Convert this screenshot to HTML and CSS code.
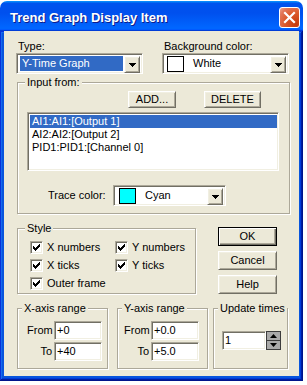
FILE: index.html
```html
<!DOCTYPE html>
<html lang="en">
<head>
    <meta charset="UTF-8">
    <title>Trend Graph Display Item</title>
    <link rel="stylesheet" href="styles.css">
</head>
<body>
    <div class="window">
        <div class="titlebar">
            <span class="title">Trend Graph Display Item</span>
            <span class="close">
                <svg width="19" height="19" viewBox="0 0 19 19"><path d="M5 5L14 14M14 5L5 14" stroke="#fff" stroke-width="2.2" stroke-linecap="square"/></svg>
            </span>
        </div>
        <div class="frame">
            <div class="client">
                <!-- type / background -->
                <div class="topRow">
                    <div class="field">
                        <div class="label">Type:</div>
                        <div class="combo">
                            <div class="comboText focus">Y-Time Graph</div>
                            <div class="drop"><svg width="7" height="4" viewBox="0 0 7 4"><path d="M0 0h7v1h-1v1h-1v1h-1v1h-1v-1h-1v-1h-1v-1h-1z"/></svg></div>
                        </div>
                    </div>
                    <div class="field">
                        <div class="label">Background color:</div>
                        <div class="combo">
                            <div class="comboText"><span class="swatch"></span>White</div>
                            <div class="drop"><svg width="7" height="4" viewBox="0 0 7 4"><path d="M0 0h7v1h-1v1h-1v1h-1v1h-1v-1h-1v-1h-1v-1h-1z"/></svg></div>
                        </div>
                    </div>
                </div>

                <!-- input from -->
                <div class="group inputBox">
                    <div class="legend">Input from:</div>
                    <div class="btnRow">
                        <div class="btn addBtn">ADD...</div>
                        <div class="btn delBtn">DELETE</div>
                    </div>
                    <div class="listbox">
                        <div class="item selected">AI1:AI1:[Output 1]</div>
                        <div class="item">AI2:AI2:[Output 2]</div>
                        <div class="item">PID1:PID1:[Channel 0]</div>
                    </div>
                    <div class="traceRow">
                        <span class="traceLabel">Trace color:</span>
                        <div class="combo traceCombo">
                            <div class="comboText"><span class="swatch cyan"></span>Cyan</div>
                            <div class="drop"><svg width="7" height="4" viewBox="0 0 7 4"><path d="M0 0h7v1h-1v1h-1v1h-1v1h-1v-1h-1v-1h-1v-1h-1z"/></svg></div>
                        </div>
                    </div>
                </div>

                <!-- style + buttons -->
                <div class="midRow">
                    <div class="group styleBox">
                        <div class="legend">Style</div>
                        <div class="checks">
                            <div class="check"><span class="box"><svg width="7" height="7" viewBox="0 0 7 7"><path d="M0 2h1v3h-1zM1 3h1v3h-1zM2 4h1v3h-1zM3 3h1v3h-1zM4 2h1v3h-1zM5 1h1v3h-1zM6 0h1v3h-1z"/></svg></span>X numbers</div>
                            <div class="check"><span class="box"><svg width="7" height="7" viewBox="0 0 7 7"><path d="M0 2h1v3h-1zM1 3h1v3h-1zM2 4h1v3h-1zM3 3h1v3h-1zM4 2h1v3h-1zM5 1h1v3h-1zM6 0h1v3h-1z"/></svg></span>Y numbers</div>
                            <div class="check"><span class="box"><svg width="7" height="7" viewBox="0 0 7 7"><path d="M0 2h1v3h-1zM1 3h1v3h-1zM2 4h1v3h-1zM3 3h1v3h-1zM4 2h1v3h-1zM5 1h1v3h-1zM6 0h1v3h-1z"/></svg></span>X ticks</div>
                            <div class="check"><span class="box"><svg width="7" height="7" viewBox="0 0 7 7"><path d="M0 2h1v3h-1zM1 3h1v3h-1zM2 4h1v3h-1zM3 3h1v3h-1zM4 2h1v3h-1zM5 1h1v3h-1zM6 0h1v3h-1z"/></svg></span>Y ticks</div>
                            <div class="check"><span class="box"><svg width="7" height="7" viewBox="0 0 7 7"><path d="M0 2h1v3h-1zM1 3h1v3h-1zM2 4h1v3h-1zM3 3h1v3h-1zM4 2h1v3h-1zM5 1h1v3h-1zM6 0h1v3h-1z"/></svg></span>Outer frame</div>
                        </div>
                    </div>
                    <div class="actions">
                        <div class="btn bigBtn default">OK</div>
                        <div class="btn bigBtn">Cancel</div>
                        <div class="btn bigBtn">Help</div>
                    </div>
                </div>

                <!-- ranges -->
                <div class="bottomRow">
                    <div class="group rangeBox xBox">
                        <div class="legend small">X-axis range</div>
                        <div class="range">
                            <span class="rLabel">From</span><div class="edit">+0</div>
                            <span class="rLabel">To</span><div class="edit">+40</div>
                        </div>
                    </div>
                    <div class="group rangeBox yBox">
                        <div class="legend small">Y-axis range</div>
                        <div class="range">
                            <span class="rLabel">From</span><div class="edit">+0.0</div>
                            <span class="rLabel">To</span><div class="edit">+5.0</div>
                        </div>
                    </div>
                    <div class="group rangeBox updBox">
                        <div class="legend small">Update times</div>
                        <div class="spinRow">
                            <div class="edit updEdit">1</div>
                            <div class="spin">
                                <svg width="15" height="19" viewBox="0 0 15 19">
                                    <rect x="0.5" y="0.5" width="14" height="18" fill="#a9a9a9" stroke="#3c3c3c"/>
                                    <path d="M1 9.5h13" stroke="#3c3c3c"/>
                                    <path d="M4 7h7l-3.5-4z"/>
                                    <path d="M4 12h7l-3.5 4z"/>
                                </svg>
                            </div>
                        </div>
                    </div>
                </div>
            </div>
        </div>
    </div>
</body>
</html>
```

FILE: styles.css
```css
*{
    margin: 0;
    padding: 0;
    box-sizing: border-box;
}
body{
    background: #fff;
    font: 11px/13px "Liberation Sans", Arial, sans-serif;
    color: #000;
}
.window{
    width: 303px;
    margin-top: 1px;
}
.titlebar{
    height: 30px;
    display: flex;
    align-items: center;
    justify-content: space-between;
    padding: 3px 3px 0 10px;
    border-radius: 7px 7px 0 0;
    background: linear-gradient(180deg, #0997ff, #0053ee 8%, #0050ee 40%, #0066ff 88%, #0066ff 93%, #005bff 95%, #003dd7 96%, #003dd7);
}
.title{
    font: bold 13px "Liberation Sans", Arial, sans-serif;
    color: #fff;
    text-shadow: 1px 1px #0f1c8a;
}
.close{
    width: 21px;
    height: 21px;
    display: flex;
    align-items: center;
    justify-content: center;
    border: 1px solid #fff;
    border-radius: 3px;
    background: radial-gradient(circle at 85% 85%, #c43a0e 0, #dc5a2c 50%, #e2775a 80%, #f0a890 100%);
}
.frame{
    background: #0855dd;
    padding: 0 4px 5px;
    box-shadow: inset -1px -1px #00138c, inset 1px 1px #0831d9, inset -2px -2px #001ea0, inset 2px 2px #166aee, inset -3px -3px #003bda, inset 3px 3px #0855dd;
}
.client{
    background: #ece9d8;
    height: 345px;
    padding: 9px 10px 0 12px;
}

/* sunken and raised edges */
.combo, .listbox, .edit, .box{
    background: #fff;
    border: 1px solid;
    border-color: #aca899 #fff #fff #aca899;
    box-shadow: inset 1px 1px #716f64, inset -1px -1px #f1efe2;
}
.btn, .drop{
    background: #ece9d8;
    border: 1px solid;
    border-color: #fff #716f64 #716f64 #fff;
    box-shadow: inset 1px 1px #f1efe2, inset -1px -1px #aca899;
    display: flex;
    align-items: center;
    justify-content: center;
}

.topRow{
    display: flex;
    gap: 19px;
}
.field{
    width: 127px;
}
.label{
    height: 13px;
    padding-left: 2px;
}
.combo{
    height: 21px;
    display: flex;
    padding: 2px;
}
.comboText{
    flex: 1;
    display: flex;
    align-items: center;
    padding-left: 2px;
    margin-right: 1px;
}
.comboText.focus{
    background: #316ac5;
    color: #fff;
    margin-left: 1px;
}
.drop{
    width: 16px;
    height: 17px;
}
.swatch{
    width: 17px;
    height: 16px;
    border: 1px solid #000;
    background: #fff;
    margin-right: 9px;
}
.swatch.cyan{
    background: #00ffff;
}

.group{
    border: 1px solid #aca899;
    box-shadow: inset 1px 1px #fff, 1px 1px #fff;
    margin-left: 1px;
}
.legend{
    display: table;
    height: 13px;
    margin: -7px 0 0 7px;
    padding: 0 2px;
    background: #ece9d8;
}
.legend.small{
    margin-left: 4px;
}

.inputBox{
    width: 273px;
    margin-top: 8px;
    padding-bottom: 7px;
}
.btnRow{
    display: flex;
    gap: 28px;
    margin: 2px 0 0 110px;
}
.addBtn{
    width: 48px;
    height: 17px;
}
.delBtn{
    width: 57px;
    height: 17px;
}
.listbox{
    width: 252px;
    height: 59px;
    margin: 4px 0 0 9px;
    padding: 2px 1px 0 2px;
}
.item{
    height: 13px;
    padding-left: 2px;
}
.item.selected{
    background: #316ac5;
    color: #fff;
}
.traceRow{
    display: flex;
    align-items: center;
    margin-top: 14px;
    padding-left: 30px;
}
.traceLabel{
    width: 65px;
}
.traceCombo{
    width: 113px;
}
.traceCombo .swatch{
    margin-left: 1px;
}

.midRow{
    display: flex;
    align-items: flex-start;
    margin-top: 14px;
}
.styleBox{
    width: 179px;
    height: 66px;
}
.checks{
    display: grid;
    grid-template-columns: 85px auto;
    grid-auto-rows: 18px;
    margin-top: 3px;
    padding-left: 12px;
}
.check{
    display: flex;
    align-items: center;
    gap: 4px;
}
.box{
    width: 13px;
    height: 13px;
    display: flex;
    align-items: center;
    justify-content: center;
}
.actions{
    display: flex;
    flex-direction: column;
    gap: 5px;
    margin: -1px 0 0 22px;
}
.bigBtn{
    width: 59px;
    height: 19px;
}
.bigBtn.default{
    border: 1px solid #000;
    box-shadow: inset 1px 1px #fff, inset -1px -1px #716f64, inset -2px -2px #aca899;
}

.bottomRow{
    display: flex;
    margin-top: 14px;
}
.rangeBox{
    height: 61px;
}
.xBox{
    width: 91px;
}
.yBox{
    width: 91px;
    margin-left: 9px;
}
.updBox{
    width: 75px;
    margin-left: 5px;
}
.range{
    display: grid;
    grid-template-columns: 25px 48px;
    column-gap: 2px;
    row-gap: 2px;
    margin-top: 6px;
    padding-left: 9px;
}
.yBox .range{
    padding-left: 6px;
}
.rLabel{
    text-align: right;
    align-self: center;
}
.edit{
    height: 19px;
    padding: 0 0 0 2px;
    line-height: 17px;
}
.spinRow{
    display: flex;
    margin-top: 16px;
    padding-left: 8px;
}
.updEdit{
    width: 44px;
}
.spin{
    height: 19px;
}
```
